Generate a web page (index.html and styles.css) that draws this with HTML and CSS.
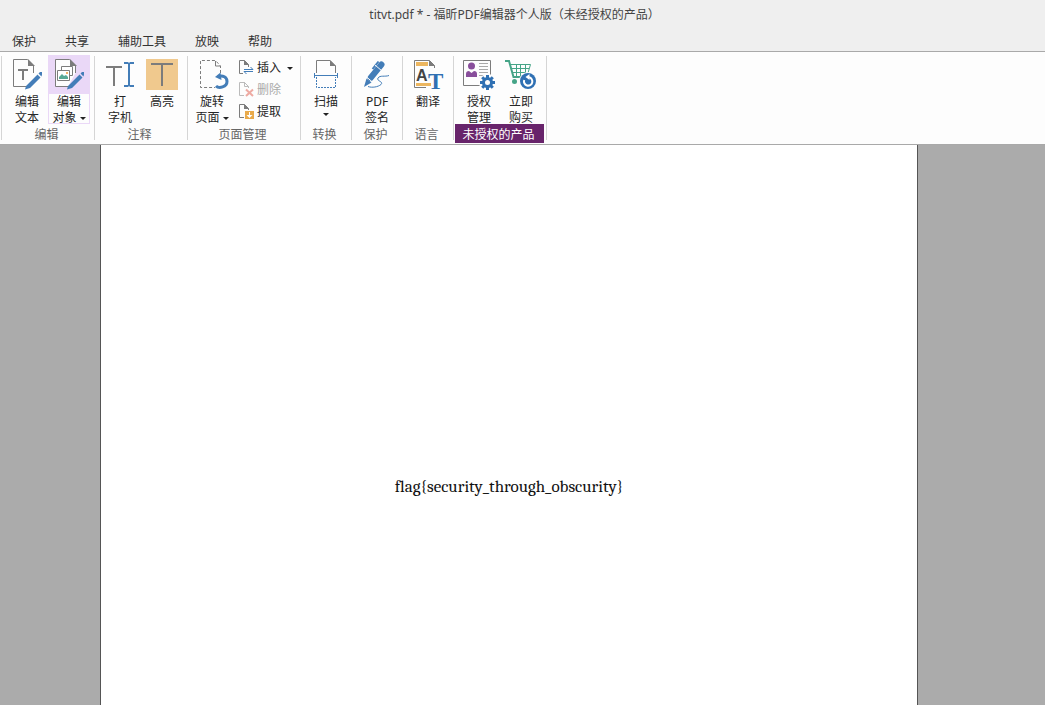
FILE: index.html
```html
<!DOCTYPE html>
<html lang="zh-CN">
<head>
<meta charset="utf-8">
<title>titvt.pdf * - 福昕PDF编辑器个人版</title>
<link rel="stylesheet" href="styles.css">
</head>
<body>
<header class="titlebar"><h1 class="title">titvt.pdf * - 福昕PDF编辑器个人版（未经授权的产品）</h1></header>
<nav class="tabs">
  <button class="tab">保护</button>
  <button class="tab">共享</button>
  <button class="tab">辅助工具</button>
  <button class="tab">放映</button>
  <button class="tab">帮助</button>
</nav>
<div class="ribbon">
  <span class="sep"></span>
  <section class="group">
    <div class="tools">
      <button class="tool">
        <svg class="icon" viewBox="0 0 42 39">
          <path class="page" d="M27.500 18V11L21.500 4.500H7.500V31.500H20"/>
          <path class="fold" d="M22 4v7h7z"/>
          <path class="gray" d="M12 14h10v2h-4v9h-2v-9h-4z"/>
          <path class="pencil" d="M20 31L31.500 19.500L34.500 22.500L24 33L19 34.500zM32.500 18.500L34 17H36V19.500L35.500 21.500z"/>
        </svg>
        <span>编辑</span><span>文本</span>
      </button>
      <button class="tool active">
        <svg class="icon" viewBox="0 0 42 39">
          <path class="page" fill="#fdfdfd" d="M27.500 18V11L21.500 4.500H7.500V31.500H20"/>
          <path class="fold" d="M22 4v7h7z"/>
          <path class="thin" fill="#fff" d="M13.500 11.500h11v9h-11z"/>
          <path class="thin" fill="#fff" d="M9.500 15.500h12v10h-12z"/>
          <path fill="#57a996" d="M11 24v-2l3-3 2 2 2-1 2 2v2z"/>
          <path fill="#efb068" d="M18 17h2v2h-2z"/>
          <path class="pencil" d="M20 31L31.500 19.500L34.500 22.500L24 33L19 34.500zM32.500 18.500L34 17H36V19.500L35.500 21.500z"/>
        </svg>
        <span>编辑</span><span class="drop">对象</span>
      </button>
    </div>
    <h2 class="caption">编辑</h2>
  </section>
  <span class="sep"></span>
  <section class="group">
    <div class="tools">
      <button class="tool">
        <svg class="icon" viewBox="0 0 42 39">
          <path class="gray" d="M7 11h16v2h-7v18h-2V13H7z"/>
          <path class="blue" d="M25 7h4l1 1 1-1h4v2h-4v21h4v2h-4l-1-1-1 1h-4v-2h4V9h-4z"/>
        </svg>
        <span>打</span><span>字机</span>
      </button>
      <button class="tool">
        <svg class="icon" viewBox="0 0 42 39">
          <path fill="#f0c98e" d="M5 4h32v31H5z"/>
          <path class="gray" d="M10 8h22v2H22v21h-2V10H10z"/>
        </svg>
        <span>高亮</span>
      </button>
    </div>
    <h2 class="caption">注释</h2>
  </section>
  <span class="sep"></span>
  <section class="group wide">
    <div class="tools">
      <button class="tool">
        <svg class="icon" viewBox="0 0 42 39">
          <path class="page dashed" d="M29.500 18V11L24.500 5.500H9.500V32.500H24"/>
          <path class="thin" d="M24.500 6v5h5"/>
          <path class="swirl" d="M25 31C28 34 36 32 36 26.500C36 22 32 20 27 21.500"/>
          <path class="blue" d="M24 22L29.500 17.500L30.500 25z"/>
        </svg>
        <span>旋转</span><span class="drop">页面</span>
      </button>
      <div class="minis">
        <button class="mini">
          <svg class="mini-icon" viewBox="0 1 16 16">
            <path class="page" d="M5 14.500H1.500V1.500H6.500L10.500 5.500V8"/>
            <path class="fold" d="M6 1v5h5z"/>
            <path class="stroke-blue" d="M6 10.500h9l-2.500-2.500M15 12.500H6l2.500 2.500"/>
          </svg><span class="drop far">插入</span>
        </button>
        <button class="mini" disabled>
          <svg class="mini-icon" viewBox="0 1 16 16">
            <path class="page" d="M6 14.500H1.500V1.500H6.500L10.500 5.500V7"/>
            <path class="thin" d="M6.500 1v4.500h4"/>
            <path class="cross" d="M8 8.500l7 6.500M15 8.500L8 15"/>
          </svg><span>删除</span>
        </button>
        <button class="mini">
          <svg class="mini-icon" viewBox="0 1 16 16">
            <path class="page" d="M6 14.500H1.500V1.500H6.500L10.500 5.500V7"/>
            <path class="fold" d="M6 1v5h5z"/>
            <path fill="#e9aa4b" d="M7 8h9v8H7z"/>
            <path fill="#fff" d="M11 9h1v3h2.500l-3 3-3-3H11z"/>
          </svg><span>提取</span>
        </button>
      </div>
    </div>
    <h2 class="caption">页面管理</h2>
  </section>
  <span class="sep"></span>
  <section class="group narrow">
    <div class="tools">
      <button class="tool">
        <svg class="icon" viewBox="0 0 42 39">
          <path class="page" d="M11.500 18V5.500H25L30.500 11V18"/>
          <path class="fold" d="M25 5v6h6z"/>
          <path class="thin-blue" d="M9 20.500H33M9.500 18v5M32.500 18v5"/>
          <path class="thin-blue dotted" d="M11.500 22V32.500H30.500V22"/>
        </svg>
        <span>扫描</span><span class="drop alone"></span>
      </button>
    </div>
    <h2 class="caption">转换</h2>
  </section>
  <span class="sep"></span>
  <section class="group narrow">
    <div class="tools">
      <button class="tool">
        <svg class="icon" viewBox="0 0 42 39">
          <path class="barrel" d="M14.500 23L25.500 9.500"/>
          <path class="blue" d="M8 32L10.500 23.500L15.500 27.500z"/>
          <path class="stroke-blue" d="M16.500 14L22.500 6.500"/>
          <path stroke="#fdfdfd" d="M10 21.500l7 6M19 10l7 6"/>
          <path class="thin-blue" d="M12 31.500C16 33 22 32 25 29.500C28 26.500 20 26 22 23C24 20 29 22 33 20.500"/>
        </svg>
        <span>PDF</span><span>签名</span>
      </button>
    </div>
    <h2 class="caption">保护</h2>
  </section>
  <span class="sep"></span>
  <section class="group narrow">
    <div class="tools">
      <button class="tool">
        <svg class="icon" viewBox="0 0 42 39">
          <path class="page" d="M19 32.500H7.500V5.500H22.500L27.500 10.500V13"/>
          <path class="fold" d="M22 5v6h6z"/>
          <path fill="#ecb65f" d="M9 7h12v4H9zM9 28h15v3H9z"/>
          <text class="letter-a" x="9" y="26">A</text>
          <text class="letter-t" x="21" y="34">T</text>
        </svg>
        <span>翻译</span>
      </button>
    </div>
    <h2 class="caption">语言</h2>
  </section>
  <span class="sep"></span>
  <section class="group">
    <div class="tools">
      <button class="tool">
        <svg class="icon" viewBox="0 0 42 39">
          <path class="page" d="M5.500 5.500H32.500V30.500H5.500z"/>
          <circle cx="13.500" cy="11" r="3.500" fill="#884e9b"/>
          <path fill="#884e9b" d="M8 22v-3q0-3 3-3l2.500 2 2.500-2q3 0 3 3v3z"/>
          <path stroke="#a9a9a9" d="M21 8.500h9M21 11.500h9M21 14.500h9M21 17.500h9M21 20.500h7"/>
          <circle cx="29.500" cy="27.500" r="8.500" fill="#fdfdfd"/>
          <path stroke="#2f70b3" stroke-width="3" d="M29.500 20v15M22 27.500h15M24.200 22.200l10.600 10.600M34.800 22.200L24.200 32.800"/>
          <circle cx="29.500" cy="27.500" r="5.500" fill="#2f70b3"/>
          <circle cx="29.500" cy="27.500" r="2.500" fill="#fdfdfd"/>
        </svg>
        <span>授权</span><span>管理</span>
      </button>
      <button class="tool">
        <svg class="icon" viewBox="0 0 42 39">
          <path class="handle" d="M5 6H9L13.500 22H22"/>
          <path class="cart" d="M10.500 9.500H30.500L28 18M11 13.500H29M12 17.500H26M16.500 9.500V21M20.500 9.500V21M25.500 9.500V18"/>
          <circle cx="14.500" cy="26.500" r="2.500" fill="#45a487"/>
          <circle cx="28" cy="26" r="9" fill="#fdfdfd"/>
          <circle cx="28" cy="26" r="8" fill="#2f70b3"/>
          <path class="refresh" d="M24.200 25A4.200 4.200 0 1 0 29 22.300"/>
          <path fill="#fff" d="M25.500 22L29.500 19V25z"/>
        </svg>
        <span>立即</span><span>购买</span>
      </button>
    </div>
    <h2 class="caption notice">未授权的产品</h2>
  </section>
  <span class="sep"></span>
</div>
<main class="workspace">
  <article class="sheet"><p class="flag">flag{security_through_obscurity}</p></article>
</main>
</body>
</html>
```

FILE: styles.css
```css
* { box-sizing: border-box; }
body {
  margin: 0;
  min-height: 100vh;
  display: flex;
  flex-direction: column;
  background: #efefef;
  color: #262626;
  font: 12px/16px "Noto Sans", "Noto Sans CJK SC", sans-serif;
}
button {
  margin: 0;
  padding: 0;
  border: 0;
  background: none;
  color: inherit;
  font: inherit;
}
.titlebar { padding: 7px 16px 5px 0; text-align: center; }
.title { margin: 0; font-size: 12px; line-height: 16px; font-weight: 400; color: #444; }
.tabs {
  display: flex;
  gap: 29px;
  padding: 6px 12px 1px;
  border-bottom: 1px solid #a9a9a9;
}
.tab { color: #333; }
.ribbon {
  display: flex;
  padding: 0 0 1px 1px;
  background: #fdfdfd;
  border-bottom: 1px solid #a9a9a9;
}
.sep { width: 1px; margin: 4px 0 3px; background: #d5d5d5; }
.group { width: 92px; padding-top: 3px; }
.wide { width: 112px; }
.narrow { width: 50px; }
.tools { display: flex; justify-content: center; height: 69px; }
.wide .tools { justify-content: flex-start; gap: 5px; padding-left: 3px; }
.tool {
  display: flex;
  flex-direction: column;
  align-items: center;
  justify-content: flex-start;
  width: 42px;
  white-space: nowrap;
}
.active {
  background: linear-gradient(#ead8f7 39px, #fdfdfd 39px);
  box-shadow: inset 0 0 0 1px #ead8f7;
}
.icon { display: block; width: 42px; height: 39px; flex: none; fill: none; }
.caption {
  margin: 0;
  padding: 2px 3px 0 0;
  font-size: 12px;
  line-height: 17px;
  font-weight: 400;
  text-align: center;
  color: #666;
}
.group .notice { margin: 0 2px 0 1px; padding: 2px 2px 0 0; background: #68246b; color: #fff; }
.drop { display: flex; align-items: center; gap: 3px; }
.drop::after {
  content: "";
  border: 3px solid transparent;
  border-top-color: #222;
  border-bottom: 0;
}
.alone { height: 8px; }
.far { gap: 6px; }
.minis { display: flex; flex-direction: column; padding-top: 2px; }
.mini { display: flex; align-items: center; gap: 3px; height: 22px; }
.mini:disabled > span { color: #aaa; }
.mini:disabled .mini-icon { opacity: 0.5; }
.mini-icon { width: 16px; height: 16px; fill: none; }
.page, .thin { stroke: #7c7c7c; }
.fold, .gray { fill: #7c7c7c; }
.dashed { stroke-dasharray: 3 2; }
.dotted { stroke-dasharray: 2 1; }
.blue, .pencil { fill: #437db8; }
.thin-blue { stroke: #437db8; }
.stroke-blue { stroke: #437db8; stroke-width: 2; }
.mini-icon .stroke-blue { stroke-width: 1; }
.barrel { stroke: #437db8; stroke-width: 6; stroke-linecap: round; }
.swirl { stroke: #437db8; stroke-width: 3; }
.cross { stroke: #e05a4a; stroke-width: 2; }
.cart { stroke: #45a487; }
.handle { stroke: #45a487; stroke-width: 2; }
.refresh { stroke: #fff; stroke-width: 2; }
.letter-a { font: bold 16px "Liberation Sans", sans-serif; fill: #444; }
.letter-t { font: bold 23px "Liberation Serif", serif; fill: #2f70b3; }
.workspace { flex: 1; display: flex; padding: 0 127px 0 100px; background: #ababab; }
.sheet {
  flex: 1;
  padding-top: 332px;
  background: #fff;
  border: solid #555;
  border-width: 0 1px;
}
.flag {
  margin: 0;
  text-align: center;
  color: #111;
  font: 17px/20px Cambria, "DejaVu Serif", serif;
}
```
